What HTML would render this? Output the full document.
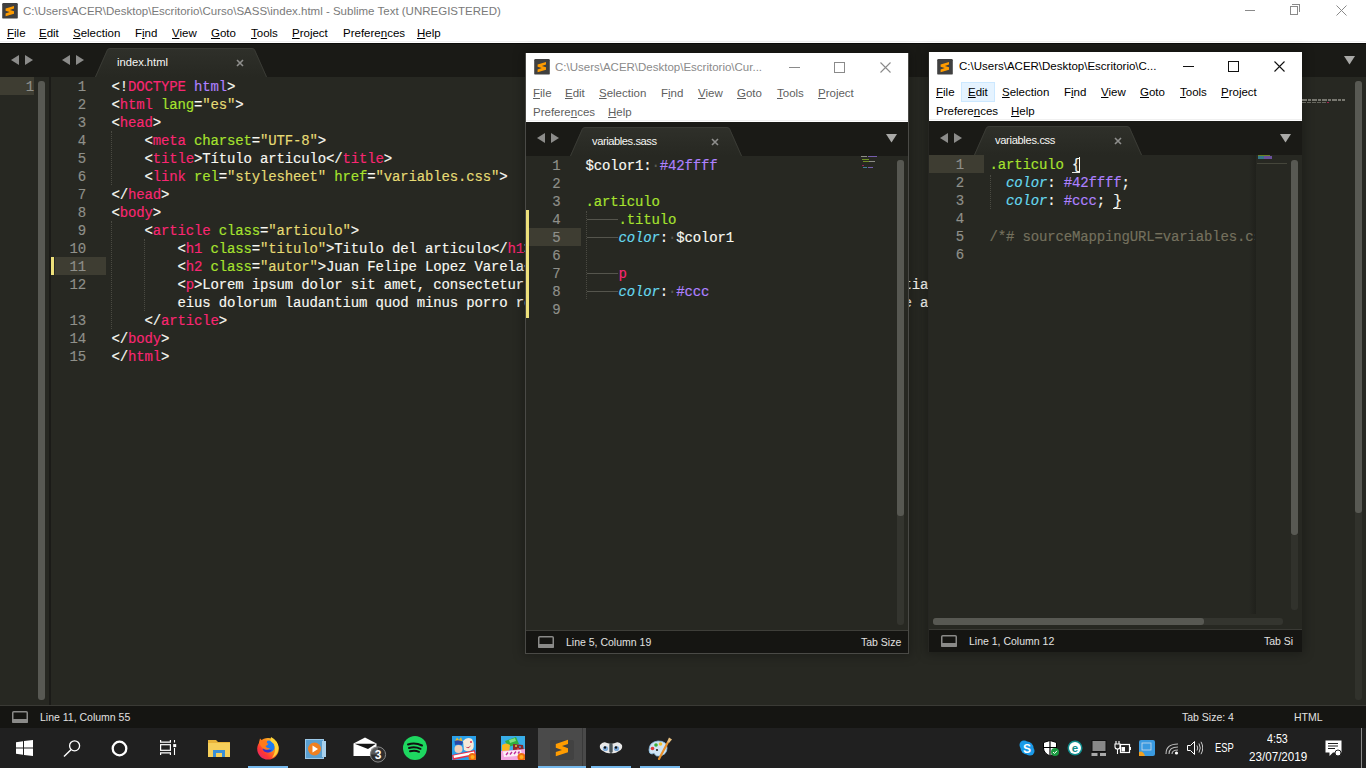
<!DOCTYPE html><html><head><meta charset="utf-8"><style>
*{margin:0;padding:0;box-sizing:content-box}
html,body{width:1366px;height:768px;overflow:hidden;background:#272822;position:relative}
div,span{white-space:pre}
.ui{position:absolute;font-family:"Liberation Sans",sans-serif;font-size:11.5px;line-height:14px}
.menu u{text-decoration:underline;text-underline-offset:1px}
.code{position:absolute;font-family:"Liberation Mono",monospace;font-size:14px;letter-spacing:-0.15px;line-height:18px;color:#f8f8f2;-webkit-text-stroke:0.15px currentColor}
.ln{position:absolute;font-family:"Liberation Mono",monospace;font-size:14px;letter-spacing:-0.15px;line-height:18px;color:#8f908a;text-align:right;-webkit-text-stroke:0.15px currentColor}
.abs{position:absolute}
</style></head><body>
<div class="abs" style="left:0;top:0;width:1366px;height:41px;background:#fff"></div><div class="abs" style="left:0;top:41px;width:1366px;height:1px;background:#f0f0f0"></div><div class="abs" style="left:0;top:42px;width:1366px;height:1px;background:#fff"></div><svg style="position:absolute;left:2px;top:3px" width="16" height="16" viewBox="0 0 16 16"><rect x="0.2" y="0" width="15.6" height="15.6" rx="1.2" fill="#404040"/><path d="M3.6 5.6 L12 3 L12 5.6 L7.9 6.9 L12 8.2 L12 10.8 L3.6 13.3 L3.6 10.5 L7.8 9.1 L3.6 7.8 Z" fill="#ff9c00"/></svg><div class="ui" style="left:23px;top:4px;color:#7a7a7a">C:\Users\ACER\Desktop\Escritorio\Curso\SASS\index.html - Sublime Text (UNREGISTERED)</div><div class="abs" style="left:1245px;top:10px;width:10px;height:1px;background:#8a8a8a"></div><div class="abs" style="left:1290px;top:6px;width:6px;height:7px;border:1px solid #8a8a8a"></div><div class="abs" style="left:1292px;top:4px;width:7px;height:7px;border-top:1px solid #8a8a8a;border-right:1px solid #8a8a8a"></div><svg style="position:absolute;left:1336px;top:5px" width="11" height="11" viewBox="0 0 11 11"><path d="M0.5 0.5 L10.5 10.5 M10.5 0.5 L0.5 10.5" stroke="#8a8a8a" stroke-width="1"/></svg><div class="ui menu" style="left:7px;top:26px;color:#000"><u>F</u>ile</div><div class="ui menu" style="left:39px;top:26px;color:#000"><u>E</u>dit</div><div class="ui menu" style="left:73px;top:26px;color:#000"><u>S</u>election</div><div class="ui menu" style="left:135px;top:26px;color:#000">F<u>i</u>nd</div><div class="ui menu" style="left:172px;top:26px;color:#000"><u>V</u>iew</div><div class="ui menu" style="left:211px;top:26px;color:#000"><u>G</u>oto</div><div class="ui menu" style="left:251px;top:26px;color:#000"><u>T</u>ools</div><div class="ui menu" style="left:292px;top:26px;color:#000"><u>P</u>roject</div><div class="ui menu" style="left:343px;top:26px;color:#000">Prefere<u>n</u>ces</div><div class="ui menu" style="left:417px;top:26px;color:#000"><u>H</u>elp</div><div class="abs" style="left:0;top:43px;width:1366px;height:34px;background:#1a1a16"></div><div class="abs" style="left:0;top:43px;width:1366px;height:1px;background:#0c0c0a"></div><svg style="position:absolute;left:11px;top:55px" width="24" height="11" viewBox="0 0 24 11"><path d="M8 0 L8 10 L0 5 Z" fill="#8c8c8a"/><path d="M14 0 L22 5 L14 10 Z" fill="#8c8c8a"/></svg><svg style="position:absolute;left:62px;top:55px" width="24" height="11" viewBox="0 0 24 11"><path d="M8 0 L8 10 L0 5 Z" fill="#8c8c8a"/><path d="M14 0 L22 5 L14 10 Z" fill="#8c8c8a"/></svg><svg style="position:absolute;left:95px;top:48px" width="172" height="29" viewBox="0 0 172 29"><defs><linearGradient id="tg95" x1="0" y1="0" x2="0" y2="1"><stop offset="0" stop-color="#2f302a"/><stop offset="1" stop-color="#272822"/></linearGradient></defs><path d="M0 29 L12 2 Q13 0 15 0 L157 0 Q159 0 160 2 L172 29 Z" fill="url(#tg95)"/><path d="M0.5 29 L12.3 2.3 Q13.3 0.5 15 0.5 L157 0.5 Q158.7 0.5 159.7 2.3 L171.5 29" fill="none" stroke="#3a3b35" stroke-width="1"/></svg><div class="ui" style="left:117px;top:55px;color:#f6f6f4;font-size:11.2px;letter-spacing:0px">index.html</div><svg style="position:absolute;left:236px;top:59px" width="8" height="8" viewBox="0 0 8 8"><path d="M1 1 L7 7 M7 1 L1 7" stroke="#8f8f8d" stroke-width="1.6"/></svg><svg style="position:absolute;left:1344px;top:56px" width="11" height="9" viewBox="0 0 11 9"><path d="M0 0 L11 0 L5.5 8.5 Z" fill="#a9a9a7"/></svg><div class="abs" style="left:0;top:77px;width:34px;height:18px;background:#3e3d32"></div><div class="ln" style="left:0;top:78px;width:34px">1</div><div class="abs" style="left:38px;top:81px;width:7px;height:619px;background:#585953;border-radius:3px"></div><div class="abs" style="left:49px;top:77px;width:2px;height:628px;background:#1b1b18"></div><div class="abs" style="left:51px;top:257px;width:3px;height:18px;background:#ede07a"></div><div class="abs" style="left:55px;top:257px;width:51px;height:18px;background:#3e3d32"></div><div class="ln" style="left:40px;top:78px;width:46px">1</div><div class="ln" style="left:40px;top:96px;width:46px">2</div><div class="ln" style="left:40px;top:114px;width:46px">3</div><div class="ln" style="left:40px;top:132px;width:46px">4</div><div class="ln" style="left:40px;top:150px;width:46px">5</div><div class="ln" style="left:40px;top:168px;width:46px">6</div><div class="ln" style="left:40px;top:186px;width:46px">7</div><div class="ln" style="left:40px;top:204px;width:46px">8</div><div class="ln" style="left:40px;top:222px;width:46px">9</div><div class="ln" style="left:40px;top:240px;width:46px">10</div><div class="ln" style="left:40px;top:258px;width:46px">11</div><div class="ln" style="left:40px;top:276px;width:46px">12</div><div class="ln" style="left:40px;top:312px;width:46px">13</div><div class="ln" style="left:40px;top:330px;width:46px">14</div><div class="ln" style="left:40px;top:348px;width:46px">15</div><div class="abs" style="left:111px;top:131px;width:0;height:54px;border-left:1px dotted #4a4a42"></div><div class="abs" style="left:111px;top:221px;width:0;height:108px;border-left:1px dotted #4a4a42"></div><div class="abs" style="left:144px;top:239px;width:0;height:72px;border-left:1px dotted #4a4a42"></div><div class="code" style="left:111.4px;top:78px"><span style="color:#f8f8f2;">&lt;!</span><span style="color:#f92672;">DOCTYPE</span><span style="color:#ae81ff;"> html</span><span style="color:#f8f8f2;">&gt;</span></div><div class="code" style="left:111.4px;top:96px"><span style="color:#f8f8f2;">&lt;</span><span style="color:#f92672;">html</span><span style="color:#f8f8f2;"> </span><span style="color:#a6e22e;">lang</span><span style="color:#f8f8f2;">=</span><span style="color:#e6db74;">&quot;es&quot;</span><span style="color:#f8f8f2;">&gt;</span></div><div class="code" style="left:111.4px;top:114px"><span style="color:#f8f8f2;">&lt;</span><span style="color:#f92672;">head</span><span style="color:#f8f8f2;">&gt;</span></div><div class="code" style="left:111.4px;top:132px"><span style="color:#f8f8f2;">    &lt;</span><span style="color:#f92672;">meta</span><span style="color:#f8f8f2;"> </span><span style="color:#a6e22e;">charset</span><span style="color:#f8f8f2;">=</span><span style="color:#e6db74;">&quot;UTF-8&quot;</span><span style="color:#f8f8f2;">&gt;</span></div><div class="code" style="left:111.4px;top:150px"><span style="color:#f8f8f2;">    &lt;</span><span style="color:#f92672;">title</span><span style="color:#f8f8f2;">&gt;Título articulo&lt;/</span><span style="color:#f92672;">title</span><span style="color:#f8f8f2;">&gt;</span></div><div class="code" style="left:111.4px;top:168px"><span style="color:#f8f8f2;">    &lt;</span><span style="color:#f92672;">link</span><span style="color:#f8f8f2;"> </span><span style="color:#a6e22e;">rel</span><span style="color:#f8f8f2;">=</span><span style="color:#e6db74;">&quot;stylesheet&quot;</span><span style="color:#f8f8f2;"> </span><span style="color:#a6e22e;">href</span><span style="color:#f8f8f2;">=</span><span style="color:#e6db74;">&quot;variables.css&quot;</span><span style="color:#f8f8f2;">&gt;</span></div><div class="code" style="left:111.4px;top:186px"><span style="color:#f8f8f2;">&lt;/</span><span style="color:#f92672;">head</span><span style="color:#f8f8f2;">&gt;</span></div><div class="code" style="left:111.4px;top:204px"><span style="color:#f8f8f2;">&lt;</span><span style="color:#f92672;">body</span><span style="color:#f8f8f2;">&gt;</span></div><div class="code" style="left:111.4px;top:222px"><span style="color:#f8f8f2;">    &lt;</span><span style="color:#f92672;">article</span><span style="color:#f8f8f2;"> </span><span style="color:#a6e22e;">class</span><span style="color:#f8f8f2;">=</span><span style="color:#e6db74;">&quot;articulo&quot;</span><span style="color:#f8f8f2;">&gt;</span></div><div class="code" style="left:111.4px;top:240px"><span style="color:#f8f8f2;">        &lt;</span><span style="color:#f92672;">h1</span><span style="color:#f8f8f2;"> </span><span style="color:#a6e22e;">class</span><span style="color:#f8f8f2;">=</span><span style="color:#e6db74;">&quot;titulo&quot;</span><span style="color:#f8f8f2;">&gt;Titulo del articulo&lt;/</span><span style="color:#f92672;">h1</span><span style="color:#f8f8f2;">&gt;</span></div><div class="code" style="left:111.4px;top:258px"><span style="color:#f8f8f2;">        &lt;</span><span style="color:#f92672;">h2</span><span style="color:#f8f8f2;"> </span><span style="color:#a6e22e;">class</span><span style="color:#f8f8f2;">=</span><span style="color:#e6db74;">&quot;autor&quot;</span><span style="color:#f8f8f2;">&gt;Juan Felipe Lopez Varela&lt;/</span><span style="color:#f92672;">h2</span><span style="color:#f8f8f2;">&gt;</span></div><div class="code" style="left:111.4px;top:276px"><span style="color:#f8f8f2;">        &lt;</span><span style="color:#f92672;">p</span><span style="color:#f8f8f2;">&gt;Lorem ipsum dolor sit amet, consectetur adipisicing elit. Voluptatum sed, dolor potentia </span></div><div class="code" style="left:111.4px;top:294px"><span style="color:#f8f8f2;">        eius dolorum laudantium quod minus porro repellendus voluptatum, itaque fugiat dolore ame ar aliquam</span></div><div class="code" style="left:111.4px;top:312px"><span style="color:#f8f8f2;">    &lt;/</span><span style="color:#f92672;">article</span><span style="color:#f8f8f2;">&gt;</span></div><div class="code" style="left:111.4px;top:330px"><span style="color:#f8f8f2;">&lt;/</span><span style="color:#f92672;">body</span><span style="color:#f8f8f2;">&gt;</span></div><div class="code" style="left:111.4px;top:348px"><span style="color:#f8f8f2;">&lt;/</span><span style="color:#f92672;">html</span><span style="color:#f8f8f2;">&gt;</span></div><div class="abs" style="left:1355px;top:81px;width:7px;height:619px;background:#31322c;border-radius:3px"></div><div class="abs" style="left:1355px;top:81px;width:7px;height:432px;background:#585953;border-radius:3px"></div><div class="abs" style="left:0;top:705px;width:1366px;height:1px;background:#3a3a35"></div><div class="abs" style="left:0;top:706px;width:1366px;height:22px;background:#151512"></div><svg style="position:absolute;left:12px;top:711px" width="16" height="12" viewBox="0 0 16 12"><rect x="0.75" y="0.75" width="14.5" height="10.5" rx="1" fill="none" stroke="#8a8a88" stroke-width="1.5"/><rect x="0" y="8" width="16" height="4" rx="1" fill="#8a8a88"/></svg><div class="ui" style="left:40px;top:710px;font-size:10.5px;color:#e2e2e0">Line 11, Column 55</div><div class="ui" style="left:1182px;top:710px;font-size:10.5px;color:#e2e2e0">Tab Size: 4</div><div class="ui" style="left:1294px;top:710px;font-size:10.5px;color:#e2e2e0">HTML</div><div class="abs" style="left:525px;top:53px;width:384px;height:601px;box-shadow:0 0 10px 2px rgba(0,0,0,0.28);background:#272822"></div><div class="abs" style="left:526px;top:53px;width:382px;height:69px;background:#fff"></div><div class="abs" style="left:526px;top:120px;width:382px;height:1px;background:#f0f0f0"></div><svg style="position:absolute;left:534px;top:59px" width="16" height="16" viewBox="0 0 16 16"><rect x="0.2" y="0" width="15.6" height="15.6" rx="1.2" fill="#404040"/><path d="M3.6 5.6 L12 3 L12 5.6 L7.9 6.9 L12 8.2 L12 10.8 L3.6 13.3 L3.6 10.5 L7.8 9.1 L3.6 7.8 Z" fill="#ff9c00"/></svg><div class="ui" style="left:555px;top:60px;color:#8a8a8a">C:\Users\ACER\Desktop\Escritorio\Cur...</div><div style="position:absolute;left:789px;top:67px;width:11px;height:1px;background:#8a8a8a"></div><div style="position:absolute;left:834px;top:62px;width:9px;height:9px;border:1px solid #8a8a8a"></div><svg style="position:absolute;left:880px;top:62px" width="11" height="11" viewBox="0 0 11 11"><path d="M0.5 0.5 L10.5 10.5 M10.5 0.5 L0.5 10.5" stroke="#8a8a8a" stroke-width="1.1"/></svg><div class="ui menu" style="left:533px;top:86px;color:#606060"><u>F</u>ile</div><div class="ui menu" style="left:565px;top:86px;color:#606060"><u>E</u>dit</div><div class="ui menu" style="left:599px;top:86px;color:#606060"><u>S</u>election</div><div class="ui menu" style="left:661px;top:86px;color:#606060">F<u>i</u>nd</div><div class="ui menu" style="left:698px;top:86px;color:#606060"><u>V</u>iew</div><div class="ui menu" style="left:737px;top:86px;color:#606060"><u>G</u>oto</div><div class="ui menu" style="left:777px;top:86px;color:#606060"><u>T</u>ools</div><div class="ui menu" style="left:818px;top:86px;color:#606060"><u>P</u>roject</div><div class="ui menu" style="left:533px;top:105px;color:#606060">Prefere<u>n</u>ces</div><div class="ui menu" style="left:608px;top:105px;color:#606060"><u>H</u>elp</div><div class="abs" style="left:526px;top:122px;width:382px;height:34px;background:#1a1a16"></div><svg style="position:absolute;left:537px;top:133px" width="24" height="11" viewBox="0 0 24 11"><path d="M8 0 L8 10 L0 5 Z" fill="#8c8c8a"/><path d="M14 0 L22 5 L14 10 Z" fill="#8c8c8a"/></svg><svg style="position:absolute;left:570px;top:127px" width="172" height="29" viewBox="0 0 172 29"><defs><linearGradient id="tg570" x1="0" y1="0" x2="0" y2="1"><stop offset="0" stop-color="#2f302a"/><stop offset="1" stop-color="#272822"/></linearGradient></defs><path d="M0 29 L12 2 Q13 0 15 0 L157 0 Q159 0 160 2 L172 29 Z" fill="url(#tg570)"/><path d="M0.5 29 L12.3 2.3 Q13.3 0.5 15 0.5 L157 0.5 Q158.7 0.5 159.7 2.3 L171.5 29" fill="none" stroke="#3a3b35" stroke-width="1"/></svg><div class="ui" style="left:592px;top:134px;color:#f6f6f4;font-size:11.2px;letter-spacing:-0.45px">variables.sass</div><svg style="position:absolute;left:711px;top:138px" width="8" height="8" viewBox="0 0 8 8"><path d="M1 1 L7 7 M7 1 L1 7" stroke="#8f8f8d" stroke-width="1.6"/></svg><svg style="position:absolute;left:886px;top:134px" width="11" height="9" viewBox="0 0 11 9"><path d="M0 0 L11 0 L5.5 8.5 Z" fill="#a9a9a7"/></svg><div class="abs" style="left:526px;top:210px;width:3px;height:108px;background:#ede07a"></div><div class="abs" style="left:529px;top:228px;width:52px;height:18px;background:#3e3d32"></div><div class="ln" style="left:526px;top:157px;width:34.6px">1</div><div class="ln" style="left:526px;top:175px;width:34.6px">2</div><div class="ln" style="left:526px;top:193px;width:34.6px">3</div><div class="ln" style="left:526px;top:211px;width:34.6px">4</div><div class="ln" style="left:526px;top:229px;width:34.6px">5</div><div class="ln" style="left:526px;top:247px;width:34.6px">6</div><div class="ln" style="left:526px;top:265px;width:34.6px">7</div><div class="ln" style="left:526px;top:283px;width:34.6px">8</div><div class="ln" style="left:526px;top:301px;width:34.6px">9</div><div class="code" style="left:585.4px;top:157px"><span style="color:#f8f8f2;">$color1:</span><span style="color:#5a5a52;">·</span><span style="color:#ae81ff;">#42ffff</span></div><div class="code" style="left:585.4px;top:193px"><span style="color:#a6e22e;">.articulo</span></div><div class="code" style="left:585.4px;top:211px"><span style="color:#f8f8f2;">    </span><span style="color:#a6e22e;">.titulo</span></div><div class="code" style="left:585.4px;top:229px"><span style="color:#f8f8f2;">    </span><span style="color:#66d9ef;font-style:italic">color</span><span style="color:#f8f8f2;">:</span><span style="color:#5a5a52;">·</span><span style="color:#f8f8f2;">$color1</span></div><div class="code" style="left:585.4px;top:265px"><span style="color:#f8f8f2;">    </span><span style="color:#f92672;">p</span></div><div class="code" style="left:585.4px;top:283px"><span style="color:#f8f8f2;">    </span><span style="color:#66d9ef;font-style:italic">color</span><span style="color:#f8f8f2;">:</span><span style="color:#5a5a52;">·</span><span style="color:#ae81ff;">#ccc</span></div><div class="abs" style="left:587px;top:219px;width:31px;height:1px;background:#55554d"></div><div class="abs" style="left:587px;top:237px;width:31px;height:1px;background:#55554d"></div><div class="abs" style="left:587px;top:273px;width:31px;height:1px;background:#55554d"></div><div class="abs" style="left:587px;top:291px;width:31px;height:1px;background:#55554d"></div><div class="abs" style="left:586px;top:211px;width:0;height:88px;border-left:1px dotted #4a4a42"></div><div class="abs" style="left:861px;top:156px;width:6px;height:1px;background:#a8a8a0;opacity:0.8"></div><div class="abs" style="left:868px;top:156px;width:9px;height:1px;background:#8a6ad0;opacity:0.8"></div><div class="abs" style="left:862px;top:159px;width:7px;height:1px;background:#80a828;opacity:0.8"></div><div class="abs" style="left:863px;top:161px;width:6px;height:1px;background:#80a828;opacity:0.8"></div><div class="abs" style="left:869px;top:161px;width:6px;height:1px;background:#a8a8a0;opacity:0.8"></div><div class="abs" style="left:862px;top:165px;width:2px;height:1px;background:#b02060;opacity:0.8"></div><div class="abs" style="left:863px;top:167px;width:4px;height:1px;background:#4a98b8;opacity:0.8"></div><div class="abs" style="left:868px;top:167px;width:5px;height:1px;background:#8a6ad0;opacity:0.8"></div><div class="abs" style="left:897px;top:160px;width:7px;height:465px;background:#34352f;border-radius:3px"></div><div class="abs" style="left:897px;top:160px;width:7px;height:356px;background:#575852;border-radius:3px"></div><div class="abs" style="left:526px;top:630px;width:382px;height:1px;background:#3e3e39"></div><div class="abs" style="left:526px;top:631px;width:382px;height:22px;background:#151512"></div><svg style="position:absolute;left:538px;top:636px" width="16" height="12" viewBox="0 0 16 12"><rect x="0.75" y="0.75" width="14.5" height="10.5" rx="1" fill="none" stroke="#8a8a88" stroke-width="1.5"/><rect x="0" y="8" width="16" height="4" rx="1" fill="#8a8a88"/></svg><div class="ui" style="left:566px;top:635px;font-size:10.5px;color:#e2e2e0">Line 5, Column 19</div><div class="ui" style="left:861px;top:635px;font-size:10.5px;color:#e2e2e0">Tab Size</div><div class="abs" style="left:525px;top:53px;width:382px;height:600px;border:1px solid #4a4a46;border-top:none"></div><div class="abs" style="left:928px;top:52px;width:374px;height:600px;box-shadow:0 0 10px 2px rgba(0,0,0,0.28);background:#272822"></div><div class="abs" style="left:928px;top:52px;width:374px;height:69px;background:#fff"></div><div class="abs" style="left:929px;top:119px;width:373px;height:1px;background:#f0f0f0"></div><svg style="position:absolute;left:937px;top:59px" width="16" height="16" viewBox="0 0 16 16"><rect x="0.2" y="0" width="15.6" height="15.6" rx="1.2" fill="#404040"/><path d="M3.6 5.6 L12 3 L12 5.6 L7.9 6.9 L12 8.2 L12 10.8 L3.6 13.3 L3.6 10.5 L7.8 9.1 L3.6 7.8 Z" fill="#ff9c00"/></svg><div class="ui" style="left:959px;top:59px;color:#000">C:\Users\ACER\Desktop\Escritorio\C...</div><div style="position:absolute;left:1183px;top:66px;width:11px;height:1px;background:#111"></div><div style="position:absolute;left:1228px;top:61px;width:9px;height:9px;border:1px solid #111"></div><svg style="position:absolute;left:1274px;top:61px" width="11" height="11" viewBox="0 0 11 11"><path d="M0.5 0.5 L10.5 10.5 M10.5 0.5 L0.5 10.5" stroke="#111" stroke-width="1.1"/></svg><div class="abs" style="left:961px;top:82px;width:32px;height:18px;background:#e5f3ff;border:1px solid #cce8ff"></div><div class="ui menu" style="left:936px;top:85px;color:#000"><u>F</u>ile</div><div class="ui menu" style="left:968px;top:85px;color:#000"><u>E</u>dit</div><div class="ui menu" style="left:1002px;top:85px;color:#000"><u>S</u>election</div><div class="ui menu" style="left:1064px;top:85px;color:#000">F<u>i</u>nd</div><div class="ui menu" style="left:1101px;top:85px;color:#000"><u>V</u>iew</div><div class="ui menu" style="left:1140px;top:85px;color:#000"><u>G</u>oto</div><div class="ui menu" style="left:1180px;top:85px;color:#000"><u>T</u>ools</div><div class="ui menu" style="left:1221px;top:85px;color:#000"><u>P</u>roject</div><div class="ui menu" style="left:936px;top:104px;color:#000">Prefere<u>n</u>ces</div><div class="ui menu" style="left:1011px;top:104px;color:#000"><u>H</u>elp</div><div class="abs" style="left:928px;top:121px;width:374px;height:34px;background:#1a1a16"></div><svg style="position:absolute;left:940px;top:133px" width="24" height="11" viewBox="0 0 24 11"><path d="M8 0 L8 10 L0 5 Z" fill="#8c8c8a"/><path d="M14 0 L22 5 L14 10 Z" fill="#8c8c8a"/></svg><svg style="position:absolute;left:974px;top:126px" width="168" height="29" viewBox="0 0 168 29"><defs><linearGradient id="tg974" x1="0" y1="0" x2="0" y2="1"><stop offset="0" stop-color="#2f302a"/><stop offset="1" stop-color="#272822"/></linearGradient></defs><path d="M0 29 L12 2 Q13 0 15 0 L153 0 Q155 0 156 2 L168 29 Z" fill="url(#tg974)"/><path d="M0.5 29 L12.3 2.3 Q13.3 0.5 15 0.5 L153 0.5 Q154.7 0.5 155.7 2.3 L167.5 29" fill="none" stroke="#3a3b35" stroke-width="1"/></svg><div class="ui" style="left:995px;top:133px;color:#f6f6f4;font-size:11.2px;letter-spacing:-0.35px">variables.css</div><svg style="position:absolute;left:1114px;top:137px" width="8" height="8" viewBox="0 0 8 8"><path d="M1 1 L7 7 M7 1 L1 7" stroke="#8f8f8d" stroke-width="1.6"/></svg><svg style="position:absolute;left:1280px;top:134px" width="11" height="9" viewBox="0 0 11 9"><path d="M0 0 L11 0 L5.5 8.5 Z" fill="#a9a9a7"/></svg><div class="abs" style="left:929px;top:155px;width:55px;height:18px;background:#3e3d32"></div><div class="ln" style="left:928px;top:156px;width:36px">1</div><div class="ln" style="left:928px;top:174px;width:36px">2</div><div class="ln" style="left:928px;top:192px;width:36px">3</div><div class="ln" style="left:928px;top:210px;width:36px">4</div><div class="ln" style="left:928px;top:228px;width:36px">5</div><div class="ln" style="left:928px;top:246px;width:36px">6</div><div class="code" style="width:266px;overflow:hidden;left:989.4px;top:156px"><span style="color:#a6e22e;">.articulo</span><span style="color:#f8f8f2;"> </span><span style="color:#f8f8f2;">{</span></div><div class="code" style="width:266px;overflow:hidden;left:989.4px;top:174px"><span style="color:#f8f8f2;">  </span><span style="color:#66d9ef;font-style:italic">color</span><span style="color:#f8f8f2;">: </span><span style="color:#ae81ff;">#42ffff</span><span style="color:#f8f8f2;">;</span></div><div class="code" style="width:266px;overflow:hidden;left:989.4px;top:192px"><span style="color:#f8f8f2;">  </span><span style="color:#66d9ef;font-style:italic">color</span><span style="color:#f8f8f2;">: </span><span style="color:#ae81ff;">#ccc</span><span style="color:#f8f8f2;">; </span><span style="color:#f8f8f2;">}</span></div><div class="code" style="width:266px;overflow:hidden;left:989.4px;top:228px"><span style="color:#75715e;">/*# sourceMappingURL=variables.css */</span></div><div class="abs" style="left:1079px;top:157px;width:1px;height:16px;background:#f8f8f0"></div><div class="abs" style="left:1072px;top:172px;width:8px;height:1px;background:#e8e8e0"></div><div class="abs" style="left:1113px;top:208px;width:8px;height:1px;background:#e8e8e0"></div><div class="abs" style="left:990px;top:175px;width:0;height:34px;border-left:1px dotted #4a4a42"></div><div class="abs" style="left:1249px;top:155px;width:7px;height:459px;background:linear-gradient(90deg,rgba(0,0,0,0),rgba(0,0,0,0.18))"></div><div class="abs" style="left:1258px;top:155px;width:12px;height:1px;background:#7a9a28;opacity:0.8"></div><div class="abs" style="left:1258px;top:156px;width:6px;height:3px;background:#3a8aa0;opacity:0.8"></div><div class="abs" style="left:1264px;top:156px;width:8px;height:3px;background:#7a5ab8;opacity:0.8"></div><div class="abs" style="left:1257px;top:163px;width:30px;height:1px;background:#4e4d42;opacity:0.8"></div><div class="abs" style="left:1291px;top:160px;width:7px;height:375px;background:#585953;border-radius:3px"></div><div class="abs" style="left:1291px;top:535px;width:7px;height:75px;background:#31322c;border-radius:0 0 3px 3px"></div><div class="abs" style="left:933px;top:618px;width:350px;height:7px;background:#34352f;border-radius:3px"></div><div class="abs" style="left:933px;top:618px;width:271px;height:7px;background:#585953;border-radius:3px"></div><div class="abs" style="left:928px;top:629px;width:374px;height:1px;background:#3a3a35"></div><div class="abs" style="left:928px;top:630px;width:374px;height:22px;background:#151512"></div><svg style="position:absolute;left:941px;top:635px" width="16" height="12" viewBox="0 0 16 12"><rect x="0.75" y="0.75" width="14.5" height="10.5" rx="1" fill="none" stroke="#8a8a88" stroke-width="1.5"/><rect x="0" y="8" width="16" height="4" rx="1" fill="#8a8a88"/></svg><div class="ui" style="left:969px;top:634px;font-size:10.5px;color:#e2e2e0">Line 1, Column 12</div><div class="ui" style="left:1264px;top:634px;font-size:10.5px;color:#e2e2e0">Tab Si</div><div class="abs" style="left:928px;top:52px;width:1px;height:600px;background:#262622"></div><div class="abs" style="left:1302px;top:99px;width:43px;height:2px;background:repeating-linear-gradient(90deg,#77776f 0 5px,transparent 5px 6px,#77776f 6px 9px,transparent 9px 10px)"></div><div class="abs" style="left:1302px;top:102px;width:25px;height:1px;background:repeating-linear-gradient(90deg,#66665e 0 4px,transparent 4px 5px)"></div><div class="abs" style="left:1327px;top:102px;width:2px;height:1px;background:#a02050"></div><div class="abs" style="left:0;top:728px;width:1366px;height:40px;background:#202020"></div><svg style="position:absolute;left:16px;top:740px" width="17" height="16" viewBox="0 0 17 16"><path d="M0 2.2 L7 1.2 L7 7.5 L0 7.5Z M8 1 L17 0 L17 7.5 L8 7.5Z M0 8.5 L7 8.5 L7 14.8 L0 13.8Z M8 8.5 L17 8.5 L17 16 L8 15Z" fill="#fff"/></svg><svg style="position:absolute;left:63px;top:740px" width="18" height="17" viewBox="0 0 18 17"><circle cx="11.6" cy="5.8" r="5" fill="none" stroke="#fff" stroke-width="1.3"/><path d="M8.2 9.4 L1 16.5" stroke="#fff" stroke-width="1.4"/></svg><svg style="position:absolute;left:111px;top:740px" width="17" height="17" viewBox="0 0 17 17"><circle cx="8.5" cy="8.5" r="6.8" fill="none" stroke="#fff" stroke-width="2.3"/></svg><svg style="position:absolute;left:159px;top:740px" width="18" height="16" viewBox="0 0 18 16"><path d="M1.6 0 V2.2 H11.4 V0 M1.6 15 V12.8 H11.4 V15" fill="none" stroke="#fff" stroke-width="1.2"/><rect x="1.6" y="4.7" width="9.8" height="5.6" fill="none" stroke="#fff" stroke-width="1.2"/><path d="M15.5 0 V2.6 M15.5 8 V15" stroke="#fff" stroke-width="1.1"/><rect x="14.2" y="4.1" width="3" height="3" fill="#fff"/></svg><svg style="position:absolute;left:208px;top:739px" width="22" height="18" viewBox="0 0 22 18"><path d="M0 1 H8 L10 3 H22 V18 H0Z" fill="#e8b43a"/><rect x="0" y="4" width="22" height="14" fill="#f6cf5a"/><path d="M5 18 V11 H17 V18 H14 V14 H8 V18Z" fill="#3a8fd6"/></svg><svg style="position:absolute;left:256px;top:736px" width="24" height="24" viewBox="0 0 24 24"><defs><linearGradient id="ffg" x1="0" y1="1" x2="1" y2="0"><stop offset="0" stop-color="#d8208a"/><stop offset="0.3" stop-color="#ff3535"/><stop offset="0.6" stop-color="#ff8a1a"/><stop offset="1" stop-color="#ffe23a"/></linearGradient></defs><circle cx="12" cy="12.8" r="10.8" fill="url(#ffg)"/><circle cx="12.8" cy="10.5" r="6" fill="#1c7cf2"/><path d="M9 12 Q12 15 16 13.5 Q14.5 17 11 16.5 Q7.5 16 6.5 13Z" fill="#3b2fc8"/><path d="M3 6.5 L4 2.5 L6.5 4.8 Q9 3.5 11.2 5 L10.8 7.2 L12.5 7.5 Q11.5 9.5 9.5 10 Q10.5 12.5 14 12.2 Q12 14.5 9 13.5 Q5 12 3 6.5Z" fill="#ff7a1a"/><path d="M15 1 Q22 4.5 22.5 12 Q22 19 16 22 Q20 16 18.8 11 Q18 7 14.5 5Z" fill="#ffd438"/></svg><div class="abs" style="left:248px;top:766px;width:40px;height:2px;background:#76b9ed"></div><svg style="position:absolute;left:305px;top:739px" width="21" height="20" viewBox="0 0 21 20"><rect x="0.5" y="0.5" width="18" height="19" fill="#5a9fd0" stroke="#9cc8e8"/><rect x="17" y="2" width="4" height="16" fill="#a8d0ec"/><circle cx="9.5" cy="10" r="6.5" fill="#f08020"/><path d="M7.5 6.5 L13 10 L7.5 13.5Z" fill="#fff"/></svg><svg style="position:absolute;left:353px;top:737px" width="34" height="26" viewBox="0 0 34 26"><path d="M0.5 6.5 L12 0.5 L23.5 6.5 V19 H0.5Z" fill="#fff"/><path d="M1.5 6.8 H23 L15 12 Z" fill="#151515"/><circle cx="25" cy="17.5" r="7.6" fill="#2e2e2e" stroke="#8a8a8a" stroke-width="1"/><path d="M18 12 A7.6 7.6 0 0 1 25 10 V17.5 H17.5Z" fill="#777" opacity="0.6"/><text x="25" y="22" text-anchor="middle" font-family="Liberation Sans" font-weight="bold" font-size="12" fill="#fff">3</text></svg><svg style="position:absolute;left:403px;top:736px" width="24" height="24" viewBox="0 0 24 24"><circle cx="12" cy="12" r="12" fill="#1ed760"/><path d="M5 8.5 Q12 6 19 9.5 M6 12 Q12 10.3 17.5 12.8 M7 15.3 Q12 14 16 15.8" fill="none" stroke="#111" stroke-width="2" stroke-linecap="round"/></svg><svg style="position:absolute;left:452px;top:736px" width="24" height="24" viewBox="0 0 24 24"><rect width="24" height="24" fill="#2aa0ea"/><path d="M3 5 L5 1.5 L7 4 L9 1 L10.5 5 Z" fill="#e8b830"/><path d="M2.5 5 Q7 3 11 6 L10 9 Q6 8 3 9Z" fill="#2a48a8"/><circle cx="6.5" cy="13" r="4" fill="#f2d0b8"/><path d="M11 5 Q15 0 20 3 Q23 8 21 13 Q17 17 12 14 Z" fill="#f6ead8"/><path d="M13 10 Q16 13 19 9 Q17 15 13 10Z" fill="#c03050"/><circle cx="19" cy="6" r="1" fill="#e03050"/><path d="M0 19 L23 14 L24 19 L1 24Z" fill="#e8304a"/><path d="M1.5 19.5 L22 15.5 L22.5 18 L2 22Z" fill="#fff"/><circle cx="20.5" cy="21" r="4" fill="#f06a10"/><circle cx="20.5" cy="21" r="2" fill="#ffb020"/></svg><svg style="position:absolute;left:501px;top:736px" width="24" height="24" viewBox="0 0 24 24"><rect width="24" height="24" fill="#38aee8"/><path d="M4 5 L15 1 L18 8 L7 11Z" fill="#30b040"/><path d="M8 4 L14 2 L15 5 L9 7Z" fill="#80e080"/><path d="M1 9 Q5 6 9 9 L8 17 L1 17Z" fill="#f6b820"/><path d="M12 8 L22 9 L23 15 L12 15Z" fill="#8a2a2a"/><circle cx="15" cy="10" r="0.9" fill="#f0e040"/><circle cx="19" cy="11" r="0.9" fill="#40a0f0"/><circle cx="17" cy="13" r="0.9" fill="#f04040"/><path d="M0 15 L24 13 L24 24 L0 24Z" fill="#f4a6e0"/><path d="M2 15.5 L20 14 L21 19.5 L3 21Z" fill="#fbeef6"/><path d="M5 19 L7 16.5 M9 18.5 L11 16 M13 18 L15 15.5 M17 17.5 L18.5 15.5" stroke="#c02a9a" stroke-width="1.4"/><circle cx="20.5" cy="21" r="4" fill="#f06a10"/><circle cx="20.5" cy="21" r="2" fill="#ffb020"/></svg><div class="abs" style="left:538px;top:728px;width:44px;height:40px;background:#4a4a4a"></div><div class="abs" style="left:582px;top:728px;width:1px;height:40px;background:#3a3a3a"></div><div class="abs" style="left:583px;top:728px;width:3px;height:40px;background:#4a4a4a"></div><div class="abs" style="left:538px;top:766px;width:48px;height:2px;background:#76b9ed"></div><svg style="position:absolute;left:550px;top:739px" width="24" height="21" viewBox="0 0 24 21"><rect x="0" y="1" width="24" height="20" rx="2" fill="#424242"/><path d="M5.8 5 L18 0.7 L18 5 L12 7 L18 9.2 L18 13.2 L5.8 17.2 L5.8 13 L12 11 L5.8 8.8 Z" fill="#ff9c00"/></svg><svg style="position:absolute;left:599px;top:741px" width="24" height="14" viewBox="0 0 24 14"><path d="M1 4 Q4 0 8 2 L12 3 L16 2 Q20 0 23 4 Q24 8 20 10 Q16 13 12 12 Q8 13 4 10 Q0 8 1 4Z" fill="#e8e8e8"/><circle cx="6.5" cy="7.5" r="2.6" fill="#7aa8d8"/><circle cx="17.5" cy="7.5" r="2.6" fill="#7aa8d8"/><circle cx="6" cy="6.5" r="1.2" fill="#111"/><circle cx="17" cy="6.5" r="1.2" fill="#111"/><rect x="10.3" y="2" width="3.4" height="10" rx="1.7" fill="#4a5458"/></svg><div class="abs" style="left:591px;top:766px;width:40px;height:2px;background:#76b9ed"></div><svg style="position:absolute;left:648px;top:736px" width="24" height="24" viewBox="0 0 24 24"><path d="M1 14 Q1 6 10 5 Q19 5 19 12 Q19 19 11 20 Q8 20.5 7 18.5 Q6 16.5 4 18 Q1 18 1 14Z" fill="#cfe4f4" stroke="#8cc0e4" stroke-width="0.8"/><circle cx="4.5" cy="12.5" r="1.8" fill="#e03a3a"/><circle cx="8" cy="9" r="1.8" fill="#3ab03a"/><circle cx="12.5" cy="8" r="1.8" fill="#f0c030"/><circle cx="9" cy="14" r="1.1" fill="#222"/><path d="M11 23 L19.5 7" stroke="#e8902a" stroke-width="2.2" stroke-linecap="round"/><path d="M19 6 L21 1.5 L24 3.5 L21 7Z" fill="#e8c080"/></svg><div class="abs" style="left:640px;top:766px;width:40px;height:2px;background:#76b9ed"></div><svg style="position:absolute;left:1019px;top:740px" width="16" height="16" viewBox="0 0 16 16"><circle cx="5" cy="5" r="4.5" fill="#1a9ae8"/><circle cx="11" cy="11" r="4.5" fill="#1a9ae8"/><circle cx="8" cy="8" r="6.5" fill="#1a9ae8"/><text x="8" y="12.5" text-anchor="middle" font-family="Liberation Sans" font-weight="bold" font-size="12" fill="#fff">S</text></svg><svg style="position:absolute;left:1043px;top:740px" width="16" height="16" viewBox="0 0 16 16"><path d="M7 0.5 L13.5 2.5 V8 Q13.5 13 7 16 Q0.5 13 0.5 8 V2.5Z" fill="#fff" stroke="#000" stroke-width="1"/><path d="M7 1 V15 M1 7.5 H13" stroke="#000" stroke-width="1.2"/><circle cx="12" cy="12" r="4" fill="#1a9a40"/><path d="M10 12 L11.5 13.5 L14 10.8" stroke="#fff" stroke-width="1" fill="none"/></svg><svg style="position:absolute;left:1067px;top:740px" width="16" height="16" viewBox="0 0 16 16"><circle cx="8" cy="8" r="7.5" fill="#0e8a8a"/><circle cx="8" cy="8" r="6" fill="#fff"/><text x="8" y="12.3" text-anchor="middle" font-family="Liberation Sans" font-weight="bold" font-size="11.5" fill="#0e8a8a">e</text></svg><svg style="position:absolute;left:1091px;top:740px" width="16" height="16" viewBox="0 0 16 16"><rect x="1" y="0.5" width="14" height="11" fill="#888" stroke="#111"/><rect x="0.5" y="13" width="6" height="3" fill="#aaa"/><rect x="9" y="13" width="6" height="3" fill="#aaa"/></svg><svg style="position:absolute;left:1114px;top:741px" width="17" height="13" viewBox="0 0 17 13"><path d="M2 0 V3 M5 0 V3 M1 3 H6 V6 Q6 8 3.5 8 Q1 8 1 6Z M3.5 8 V13" stroke="#fff" stroke-width="1.1" fill="none"/><rect x="6.5" y="3.5" width="9" height="8" fill="none" stroke="#fff" stroke-width="1.2"/><rect x="7.5" y="6" width="3.5" height="4.5" fill="#fff"/><rect x="15.5" y="6" width="1.5" height="3" fill="#fff"/></svg><svg style="position:absolute;left:1139px;top:740px" width="16" height="16" viewBox="0 0 16 16"><rect width="16" height="16" rx="2" fill="#3a9ae0"/><rect x="3" y="3" width="9" height="7" fill="none" stroke="#cde" stroke-width="0.8"/><path d="M0 12 Q4 10 6 16 H0Z" fill="#f0a020"/></svg><svg style="position:absolute;left:1165px;top:743px" width="14" height="12" viewBox="0 0 14 12"><path d="M1 11 Q1 1 13 1 M4 11 Q4 4 13 4 M7 11 Q7 7 13 7" fill="none" stroke="#bbb" stroke-width="1.1"/><circle cx="11.5" cy="10" r="1.6" fill="#fff"/></svg><svg style="position:absolute;left:1187px;top:741px" width="16" height="14" viewBox="0 0 16 14"><path d="M0.5 4.5 H3.5 L7.5 0.5 V13.5 L3.5 9.5 H0.5Z" fill="none" stroke="#fff" stroke-width="1"/><path d="M10 4.5 Q11.5 7 10 9.5 M12 2.5 Q14.5 7 12 11.5 M14 0.8 Q17.5 7 14 13.2" fill="none" stroke="#ccc" stroke-width="1"/></svg><div class="ui" style="left:1215px;top:741px;font-size:12px;color:#fff;transform:scaleX(0.78);transform-origin:0 0">ESP</div><div class="ui" style="left:1267px;top:732px;font-size:12px;color:#fff;transform:scaleX(0.89);transform-origin:0 0">4:53</div><div class="ui" style="left:1249px;top:750px;font-size:12px;color:#fff;transform:scaleX(0.97);transform-origin:0 0">23/07/2019</div><svg style="position:absolute;left:1325px;top:740px" width="17" height="17" viewBox="0 0 17 17"><path d="M0.5 0.5 H16.5 V12.5 H8 L4.5 16 V12.5 H0.5Z" fill="#fff"/><path d="M3 3.5 H13 M3 6 H13 M3 8.5 H10" stroke="#202020" stroke-width="1"/><circle cx="13" cy="13" r="3" fill="#fff" stroke="#202020" stroke-width="1"/></svg><div class="abs" style="left:1361px;top:728px;width:1px;height:40px;background:#8a8a8a"></div></body></html>
